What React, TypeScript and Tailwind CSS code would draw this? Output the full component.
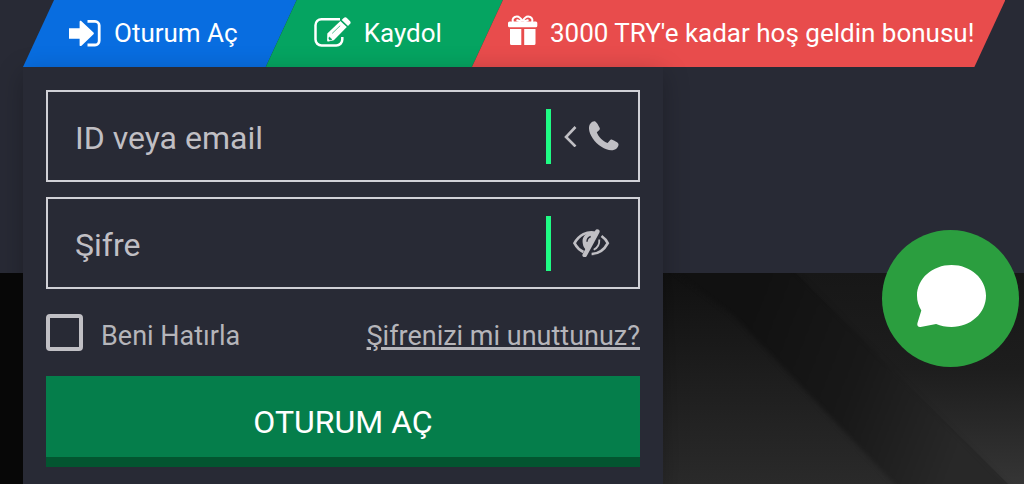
import { useState } from "react";
import type { ReactNode } from "react";

function SignInIcon() {
  return (
    <svg width="34" height="30" viewBox="0 0 34 30" aria-hidden="true">
      <path d="M1 9.2h10.6V3c0-1.2 1-1.6 1.900-.8l12 11.400c.5.5.5 1.200 0 1.700l-12 11.400c-.9.800-1.900.4-1.900-.8v-6.100H1z" fill="#fff" />
      <path d="M19.500 2.400h7.500a4.200 4.200 0 0 1 4.200 4.200v15.200a4.200 4.200 0 0 1-4.200 4.200h-7.500" fill="none" stroke="#fff" strokeWidth="2.800" />
    </svg>
  );
}

function EditIcon() {
  return (
    <svg width="38" height="34" viewBox="0 0 38 34" aria-hidden="true">
      <path
        d="M26 2.200H7.500a6 6 0 0 0-6 6v14.300a6 6 0 0 0 6 6h14.800a6 6 0 0 0 6-6V20"
        fill="none"
        stroke="#fff"
        strokeWidth="2.500"
      />
      <path d="M13.300 16.500 26.400 4l6.400 6-13 13.200-5.300 1.200c-.9.200-1.400-.3-1.400-1.200z" fill="#fff" />
      <path d="m27.700 2.900 2-1.900c1-.9 2.200-.9 3.200 0l3 2.900c1 1 1 2.200 0 3.200l-1.900 1.900z" fill="#fff" />
      <path d="m15.300 20 2.600 2.500-2 .5-1-.9zM18.200 16.400l8-7.700" stroke="#05a461" strokeWidth="0.700" fill="#05a461" />
    </svg>
  );
}

function GiftIcon() {
  return (
    <svg width="30" height="38" viewBox="0 0 30 38" aria-hidden="true">
      <path
        d="M14.500 6.500C12.500 2.500 9.500.8 6.800 2 4.500 3 4.200 5.500 5.200 7M14.500 6.500c2-4 5-5.700 7.700-4.500 2.300 1 2.600 3.500 1.600 5M13 6.500 8.500 5M16 6.500 20.500 5"
        fill="none"
        stroke="#fff"
        strokeWidth="2"
      />
      <rect x="0" y="6.500" width="29.300" height="5.800" rx="1.500" fill="#fff" />
      <path d="M2 14h11.300v16H3.500A1.500 1.500 0 0 1 2 28.500zM16.200 14h11.300v14.500a1.500 1.500 0 0 1-1.500 1.500h-9.800z" fill="#fff" />
    </svg>
  );
}

function PhoneIcon() {
  return (
    <svg width="30" height="30" viewBox="0 0 30 30" aria-hidden="true">
      <path
        d="M1.500 2.400C3 .6 5.200-.1 6.600.7c1.200.7 2.800 3.600 4 6.100.5 1 .2 1.900-.5 2.500L7.800 11.300c1.700 4.700 6 8.900 10.800 10.700l2.200-2.600c.6-.8 1.500-1 2.400-.6 2.300 1 5 2.400 5.900 3.400 1 1.300.2 3.500-1.500 5.200-3.200 2.900-9.600 2.200-15.200-1.600C4.900 20.700-.3 12.800 0 6.600c.1-1.700.6-3.200 1.500-4.200z"
        fill="#c0bfc4"
      />
    </svg>
  );
}

function CaretIcon() {
  return (
    <svg width="13" height="22" viewBox="0 0 13 22" aria-hidden="true">
      <path d="M11.500 2 2 12l9.500 9.500" fill="none" stroke="#c0bfc4" strokeWidth="2.600" />
    </svg>
  );
}

function EyeOffIcon() {
  return (
    <svg width="38" height="28" viewBox="-1 -1 38 28" fill="none" stroke="#c0bfc4" aria-hidden="true">
      <path d="M22.500 2.700C14 .8 6 5 1.500 13.200c2.300 4.300 5.300 7.200 9 8.800" strokeWidth="2.700" />
      <path d="M28.500 6c2.600 1.800 4.900 4.200 6.300 7.200-3.800 7-9 10.700-16.200 10.800" strokeWidth="2.700" />
      <path d="M20.500 3c-6-.3-10.200 3-10.200 8 0 3.500 1 6 2.600 7.600L21.500 4.500z" fill="#c0bfc4" strokeWidth="1.500" />
      <path d="M14 11.700c0-2.500 1.300-4.300 3.700-5.200" stroke="#282a35" strokeWidth="1.400" />
      <path d="M24.300 1.600 11.700 25" strokeWidth="4.600" strokeLinecap="round" />
      <path d="M26.300 9.500c.3 4.700-1.600 8.300-5.600 10.300" strokeWidth="1.800" />
    </svg>
  );
}

function ChatIcon() {
  return (
    <svg width="70" height="70" viewBox="0 0 70 70" aria-hidden="true">
      <path
        d="M35.500 1C54.600 1 70 14.500 70 31.800S54.600 63 35.500 63c-5.700 0-10.800-1.100-15.400-3L4.600 63C2.300 63.400.8 61.500 1.400 59.300L5.300 46.500C2.600 42.200 1 37.200 1 31.800 1 14.500 16.400 1 35.500 1z"
        fill="#fff"
      />
    </svg>
  );
}

function HeroBackground() {
  return (
    <svg className="absolute inset-0 h-full w-full" viewBox="0 0 1024 211" preserveAspectRatio="xMaxYMin slice" aria-hidden="true">
      <defs>
        <linearGradient id="base" x1="0" y1="0" x2="0" y2="1">
          <stop offset="0" stopColor="#111111" />
          <stop offset="1" stopColor="#2a2a2a" />
        </linearGradient>
        <linearGradient id="side" x1="0" y1="0" x2="0" y2="1">
          <stop offset="0" stopColor="#171717" />
          <stop offset="0.450" stopColor="#1d1d1d" />
          <stop offset="1" stopColor="#353535" />
        </linearGradient>
        <linearGradient id="band" gradientUnits="userSpaceOnUse" x1="740" y1="60" x2="970" y2="150">
          <stop offset="0" stopColor="#111111" />
          <stop offset="0.500" stopColor="#181818" />
          <stop offset="1" stopColor="#282828" />
        </linearGradient>
        <filter id="soft" colorInterpolationFilters="sRGB">
          <feGaussianBlur stdDeviation="2" />
        </filter>
      </defs>
      <rect width="1024" height="211" fill="url(#base)" />
      <rect width="60" height="211" fill="#080808" />
      <path d="M795 0H1024V211H1008z" fill="url(#side)" />
      <path d="M650-20H776L1020 225H908L733 42z" fill="url(#band)" filter="url(#soft)" />
    </svg>
  );
}

const tabs = [
  { name: "Oturum Aç", icon: <SignInIcon />, style: "bg-[#086de0] pl-[45px] pr-[59px]" },
  { name: "Kaydol", icon: <EditIcon />, style: "bg-[#05a461] pl-[48px] pr-[61px] -ml-[31px]" },
  { name: "3000 TRY'e kadar hoş geldin bonusu!", icon: <GiftIcon />, style: "bg-[#e84c4c] pl-[36px] pr-[31px] -ml-[31px]" },
];

function Field({ id, label, type, children }: { id: string; label: string; type: string; children: ReactNode }) {
  return (
    <div className="flex h-[92px] items-center border-2 border-[#d0d0d6] pl-[27px]">
      <input
        id={id}
        type={type}
        aria-label={label}
        placeholder={label}
        className="h-full min-w-0 flex-1 bg-transparent pt-1 text-[32px] text-[#c0bfc4] outline-none placeholder:text-[#c0bfc4]"
      />
      <div className="flex h-[55px] w-[92px] items-center justify-center gap-3 border-l-[5px] border-[#1ffb84] pr-[7px]">
        {children}
      </div>
    </div>
  );
}

export default function App() {
  const [showPassword, setShowPassword] = useState(false);

  return (
    <div className="relative flex min-h-screen flex-col overflow-hidden bg-[#282a35] font-['Roboto',sans-serif]">
      <header className="relative h-[273px] shrink-0">
        <nav className="flex h-[67px] pl-[23px]">
          {tabs.map((tab) => (
            <a
              key={tab.name}
              href="#"
              className={`flex shrink-0 items-center gap-3 whitespace-nowrap text-[26px] text-white [clip-path:polygon(31px_0,100%_0,calc(100%-31px)_100%,0_100%)] ${tab.style}`}
            >
              {tab.icon}
              <span>{tab.name}</span>
            </a>
          ))}
        </nav>

        {/* login dropdown */}
        <form
          className="absolute left-[23px] top-[67px] z-10 flex w-[640px] max-w-full flex-col bg-[#282a35] px-[23px] py-[23px] shadow-[0_6px_24px_rgba(0,0,0,0.25)]"
          onSubmit={(e) => e.preventDefault()}
        >
          <div className="flex flex-col gap-[15px]">
            <Field id="login" label="ID veya email" type="text">
              <CaretIcon />
              <button type="button" aria-label="Telefon">
                <PhoneIcon />
              </button>
            </Field>
            <Field id="password" label="Şifre" type={showPassword ? "text" : "password"}>
              <button type="button" aria-label="Şifreyi göster" onClick={() => setShowPassword(!showPassword)}>
                <EyeOffIcon />
              </button>
            </Field>
          </div>

          <div className="my-[25px] flex h-[37px] items-center justify-between text-[27px] text-[#b5b5ba]">
            <label className="flex items-center gap-[18px]">
              <input
                type="checkbox"
                className="size-[37px] appearance-none rounded border-4 border-[#c0bfc4] checked:bg-[#057e4b]"
              />
              <span className="pt-2">Beni Hatırla</span>
            </label>
            <a href="#" className="pt-2 underline decoration-3 underline-offset-2">
              Şifrenizi mi unuttunuz?
            </a>
          </div>

          <button
            type="submit"
            className="h-[91px] border-b-[10px] border-[#035530] bg-[#057e4b] pt-2.5 text-[32px] text-white"
          >
            OTURUM AÇ
          </button>
        </form>
      </header>

      <main className="relative min-h-[211px] flex-1">
        <HeroBackground />
      </main>

      <button
        type="button"
        aria-label="Sohbet"
        className="fixed right-[5px] top-[230px] z-20 flex size-[137px] items-center justify-center rounded-full bg-[#2b9e3f]"
      >
        <ChatIcon />
      </button>
    </div>
  );
}
